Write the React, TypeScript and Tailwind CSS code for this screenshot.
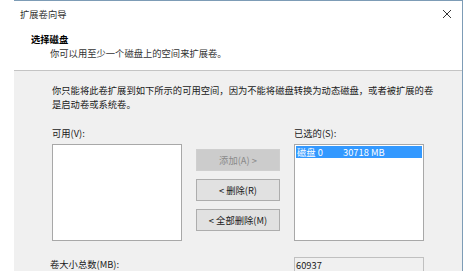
const FONT = { fontFamily: '"Noto Sans CJK SC", "Microsoft YaHei", sans-serif' };

function CloseIcon() {
  return (
    <svg width="10" height="10" viewBox="0 0 10 10" className="text-[#333]">
      <path d="M1 1 L9 9 M9 1 L1 9" stroke="currentColor" strokeWidth="1" fill="none" />
    </svg>
  );
}

function Button({ label, disabled }: { label: string; disabled?: boolean }) {
  return (
    <button
      type="button"
      className={
        disabled
          ? "h-[22px] w-full border border-[#cfcfcf] bg-[#cccccc] text-[#8a8a8a]"
          : "h-[22px] w-full border border-[#adadad] bg-[#e1e1e1] text-[#1a1a1a]"
      }
    >
      {label}
    </button>
  );
}

export default function App() {
  return (
    <div
      className="flex h-[271px] w-[464px] overflow-hidden bg-white pl-[14px] text-[9.3px] leading-[14px] text-[#1a1a1a]"
      style={FONT}
    >
      <div className="flex w-[449px] flex-col border-r border-t border-[#7d9cb6]">
        {/* title bar */}
        <div className="flex h-[25px] shrink-0 items-center justify-between bg-white pl-[6px] pr-[10px]">
          <span className="text-[#333]">扩展卷向导</span>
          <CloseIcon />
        </div>

        {/* header */}
        <div className="flex h-[45px] shrink-0 flex-col border-b border-[#c4c4c4] bg-white pt-[6px]">
          <span className="pl-[17px] font-bold text-black">选择磁盘</span>
          <span className="pl-[36px] text-[#333]">你可以用至少一个磁盘上的空间来扩展卷。</span>
        </div>

        {/* body */}
        <div className="flex shrink-0 flex-col bg-[#f0f0f0] pl-[38px] pt-[12px]">
          <p className="w-[390px]">
            你只能将此卷扩展到如下所示的可用空间，因为不能将磁盘转换为动态磁盘，或者被扩展的卷是启动卷或系统卷。
          </p>

          <div className="mt-[15px] grid grid-cols-[130px_84px_130px] gap-x-[14px]">
            <span className="h-[18px]">可用(V):</span>
            <span />
            <span>已选的(S):</span>

            <div className="h-[97px] border border-[#a8a8a8] bg-white" />
            <div className="flex flex-col gap-[8px] pt-[5px]">
              <Button label="添加(A) >" disabled />
              <Button label="< 删除(R)" />
              <Button label="< 全部删除(M)" />
            </div>
            <div className="h-[97px] border border-[#a8a8a8] bg-white p-px">
              <div className="flex h-[12px] items-center bg-[#3399ff] pl-[1px] leading-[12px] text-white">
                <span className="w-[46px]">磁盘 0</span>
                <span>30718 MB</span>
              </div>
            </div>

            <span className="col-span-2 -ml-[2px] mt-[16px]">卷大小总数(MB):</span>
            <div className="mt-[16px] h-[20px] border border-[#c0c0c0] bg-[#f0f0f0] pl-[1px]">
              60937
            </div>
          </div>
        </div>
      </div>
    </div>
  );
}
